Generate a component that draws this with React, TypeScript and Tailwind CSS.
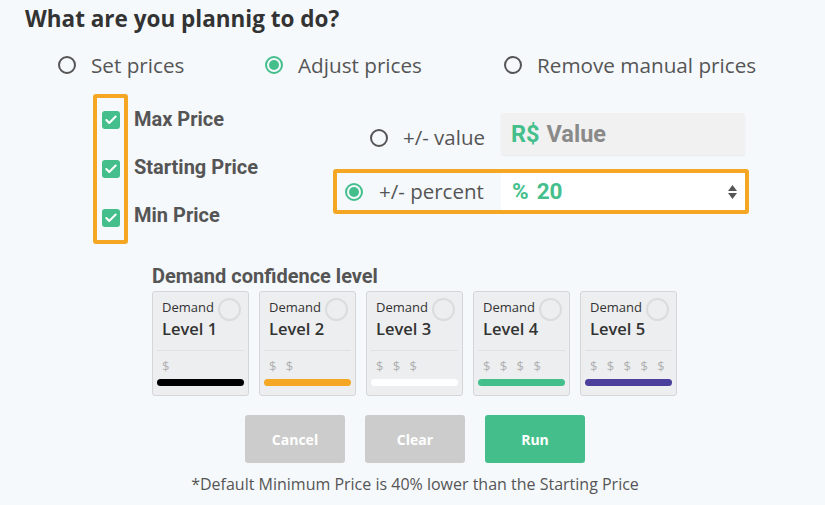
import { Check } from "lucide-react";

const levels = [
  { n: 1, bar: "bg-[#000000]" },
  { n: 2, bar: "bg-[#f5a623]" },
  { n: 3, bar: "bg-white" },
  { n: 4, bar: "bg-[#44bf8c]" },
  { n: 5, bar: "bg-[#4a3f9d]" },
];

function Radio({ on }: { on?: boolean }) {
  return on ? (
    <span className="flex h-[18px] w-[18px] shrink-0 items-center justify-center rounded-full border-2 border-[#44bf8c]">
      <span className="h-[10px] w-[10px] rounded-full bg-[#44bf8c]" />
    </span>
  ) : (
    <span className="h-[18px] w-[18px] shrink-0 rounded-full border-2 border-[#555]" />
  );
}

function Box() {
  return (
    <span className="flex h-[18px] w-[18px] items-center justify-center rounded-[3px] bg-[#44bf8c] text-white">
      <Check size={14} strokeWidth={3.5} />
    </span>
  );
}

export default function App() {
  return (
    <div className="h-[505px] w-[825px] overflow-hidden bg-[#f5f9fc] font-['Open_Sans',sans-serif] text-[#555]">
      <h1 className="pl-[25px] pt-[3px] text-[22.5px] font-bold leading-[32px] text-[#333]">
        What are you plannig to do?
      </h1>

      <div className="mt-[16px] flex items-center pl-[58px] text-[20.7px] leading-[28px]">
        <label className="flex w-[207px] items-center gap-[15px]">
          <Radio />
          Set prices
        </label>
        <label className="flex w-[239px] items-center gap-[15px]">
          <Radio on />
          Adjust prices
        </label>
        <label className="flex items-center gap-[15px]">
          <Radio />
          Remove manual prices
        </label>
      </div>

      <div className="mt-[15px] flex">
        <div className="ml-[93px] flex w-[240px] font-['Roboto',sans-serif] text-[20px] font-bold">
          <div className="flex h-[150px] w-[35px] flex-col items-center justify-between rounded-[3px] border-4 border-[#f5a623] py-[13px]">
            <Box />
            <Box />
            <Box />
          </div>
          <div className="ml-[6px] flex flex-col gap-[24px] pt-[13px] leading-[24px]">
            <span>Max Price</span>
            <span>Starting Price</span>
            <span>Min Price</span>
          </div>
        </div>

        <div className="pt-[19px]">
          <div className="flex items-center pl-[4px] pr-[4px]">
            <div className="flex w-[164px] items-center justify-end gap-[15px] pr-[16px] pt-[7px] text-[20.5px]">
              <Radio />
              +/- value
            </div>
            <div className="flex h-[42px] w-[244px] items-center rounded-[3px] bg-[#f1f1f1] pl-[10px] pt-[2px] font-['Roboto',sans-serif] text-[23.5px] font-bold shadow-[0_1px_2px_rgba(0,0,0,0.06)]">
              <span className="text-[#44bf8c]">R$</span>
              <span className="ml-[7px] text-[#8a8a8a]">Value</span>
            </div>
          </div>

          <div className="mt-[14px] flex h-[45px] items-center rounded-[3px] border-4 border-[#f5a623]">
            <div className="flex w-[164px] items-center gap-[16px] pl-[8px] text-[20.5px]">
              <Radio on />
              +/- percent
            </div>
            <div className="flex h-[37px] w-[244px] items-center bg-white pl-[11px] pr-[8px] font-['Roboto',sans-serif] text-[22.5px] font-bold text-[#44bf8c]">
              <span>%</span>
              <span className="ml-[8px]">20</span>
              <span className="ml-auto flex flex-col items-center gap-[2px] text-[#555]">
                <svg width="9" height="6" viewBox="0 0 9 6"><path d="M4.5 0L9 6H0z" fill="currentColor" /></svg>
                <svg width="9" height="6" viewBox="0 0 9 6"><path d="M0 0h9L4.5 6z" fill="currentColor" /></svg>
              </span>
            </div>
          </div>
        </div>
      </div>

      <div className="ml-[152px] mt-[20px]">
        <h2 className="font-['Roboto',sans-serif] text-[20px] font-bold leading-[24px]">Demand confidence level</h2>
        <div className="mt-[3px] flex gap-[10px]">
          {levels.map((l) => (
            <div
              key={l.n}
              className="h-[105px] w-[97px] rounded-[3px] border border-[#d4d6d8] bg-[#eceef0] px-[4px] pt-[6px]"
            >
              <div className="relative border-b border-[#dfe1e3] pb-[8px] pl-[5px]">
                <div className="text-[13px] leading-[18px] text-[#333]">Demand</div>
                <div className="text-[16.5px] font-semibold leading-[26px] text-[#333]">Level {l.n}</div>
                <span className="absolute right-[3px] top-0 h-[23px] w-[23px] rounded-full border-2 border-[#dcdcdc]" />
              </div>
              <div className="pl-[5px] pt-[5px] text-[13px] leading-[20px] tracking-[3px] text-[#b0b0b0]">
                {"$ ".repeat(l.n).trim()}
              </div>
              <div className={`mt-[3px] h-[7px] rounded-full ${l.bar}`} />
            </div>
          ))}
        </div>
      </div>

      <div className="mt-[19px] flex justify-center gap-[20px] pl-[5px] text-[14px] font-bold text-white">
        <button className="h-[48px] w-[100px] rounded-[3px] bg-[#cccccc]">Cancel</button>
        <button className="h-[48px] w-[100px] rounded-[3px] bg-[#cccccc]">Clear</button>
        <button className="h-[48px] w-[100px] rounded-[3px] bg-[#44bf8c]">Run</button>
      </div>

      <p className="mt-[10px] pl-[5px] text-center text-[16px] leading-[22px]">
        *Default Minimum Price is 40% lower than the Starting Price
      </p>
    </div>
  );
}
